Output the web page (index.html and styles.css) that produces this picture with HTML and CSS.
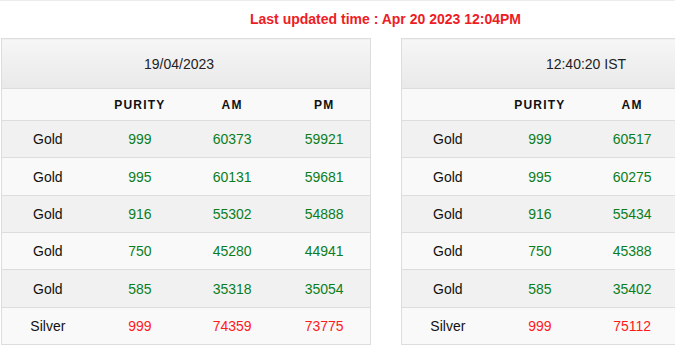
FILE: index.html
```html
<!DOCTYPE html>
<html>
<head>
<meta charset="utf-8">
<link rel="stylesheet" href="styles.css">
</head>
<body>
<div class="topline"></div>
<div class="page">
  <h1 class="updated">Last updated time : Apr 20 2023 12:04PM</h1>
  <div class="tables">
    <table class="rates">
      <thead>
        <tr class="caption"><th colspan="4" class="date">19/04/2023</th></tr>
        <tr class="cols"><th></th><th>PURITY</th><th>AM</th><th>PM</th></tr>
      </thead>
      <tbody>
        <tr><td>Gold</td><td class="g">999</td><td class="g">60373</td><td class="g">59921</td></tr>
        <tr><td>Gold</td><td class="g">995</td><td class="g">60131</td><td class="g">59681</td></tr>
        <tr><td>Gold</td><td class="g">916</td><td class="g">55302</td><td class="g">54888</td></tr>
        <tr><td>Gold</td><td class="g">750</td><td class="g">45280</td><td class="g">44941</td></tr>
        <tr><td>Gold</td><td class="g">585</td><td class="g">35318</td><td class="g">35054</td></tr>
        <tr><td>Silver</td><td class="r">999</td><td class="r">74359</td><td class="r">73775</td></tr>
      </tbody>
    </table>
    <table class="rates">
      <thead>
        <tr class="caption"><th colspan="4">12:40:20 IST</th></tr>
        <tr class="cols"><th></th><th>PURITY</th><th>AM</th><th></th></tr>
      </thead>
      <tbody>
        <tr><td>Gold</td><td class="g">999</td><td class="g">60517</td><td></td></tr>
        <tr><td>Gold</td><td class="g">995</td><td class="g">60275</td><td></td></tr>
        <tr><td>Gold</td><td class="g">916</td><td class="g">55434</td><td></td></tr>
        <tr><td>Gold</td><td class="g">750</td><td class="g">45388</td><td></td></tr>
        <tr><td>Gold</td><td class="g">585</td><td class="g">35402</td><td></td></tr>
        <tr><td>Silver</td><td class="r">999</td><td class="r">75112</td><td></td></tr>
      </tbody>
    </table>
  </div>
</div>
</body>
</html>
```
FILE: styles.css
```css
html, body {
  margin: 0;
  padding: 0;
  overflow: hidden;
  background: #fff;
  font-family: "Liberation Sans", Arial, sans-serif;
}
.topline {
  height: 1px;
  background: #ececec;
}
.page {
  width: 771px;
}
.updated {
  margin: 0;
  padding-top: 10px;
  height: 27px;
  box-sizing: border-box;
  text-align: center;
  font-size: 14px;
  font-weight: bold;
  color: #ee1c25;
  line-height: 17px;
}
.tables {
  display: flex;
  gap: 30px;
  padding-left: 1px;
  margin-top: 10px;
}
.rates {
  width: 370px;
  border-collapse: collapse;
  table-layout: fixed;
  border: 1px solid #dddddd;
  font-size: 14px;
  color: #111;
  flex: none;
}
.rates th, .rates td {
  text-align: center;
  padding: 0;
}
.caption th {
  height: 49px;
  font-weight: normal;
  font-size: 14px;
  background: linear-gradient(#f6f6f6, #e9e9e9);
  border-bottom: 1px solid #dddddd;
  color: #222;
}
.caption th.date {
  padding-right: 14px;
}
.cols th {
  height: 31px;
  font-size: 12px;
  font-weight: bold;
  letter-spacing: 1.2px;
  background: #f9f9f9;
  border-bottom: 1px solid #dddddd;
  color: #111;
}
.rates td {
  height: 36.35px;
  border-bottom: 1px solid #dddddd;
}
.rates tbody tr:nth-child(odd) td { background: #f1f1f1; }
.rates tbody tr:nth-child(even) td { background: #f9f9f9; }
.g { color: #0a7e1f; }
.r { color: #ff1a1a; }
```
